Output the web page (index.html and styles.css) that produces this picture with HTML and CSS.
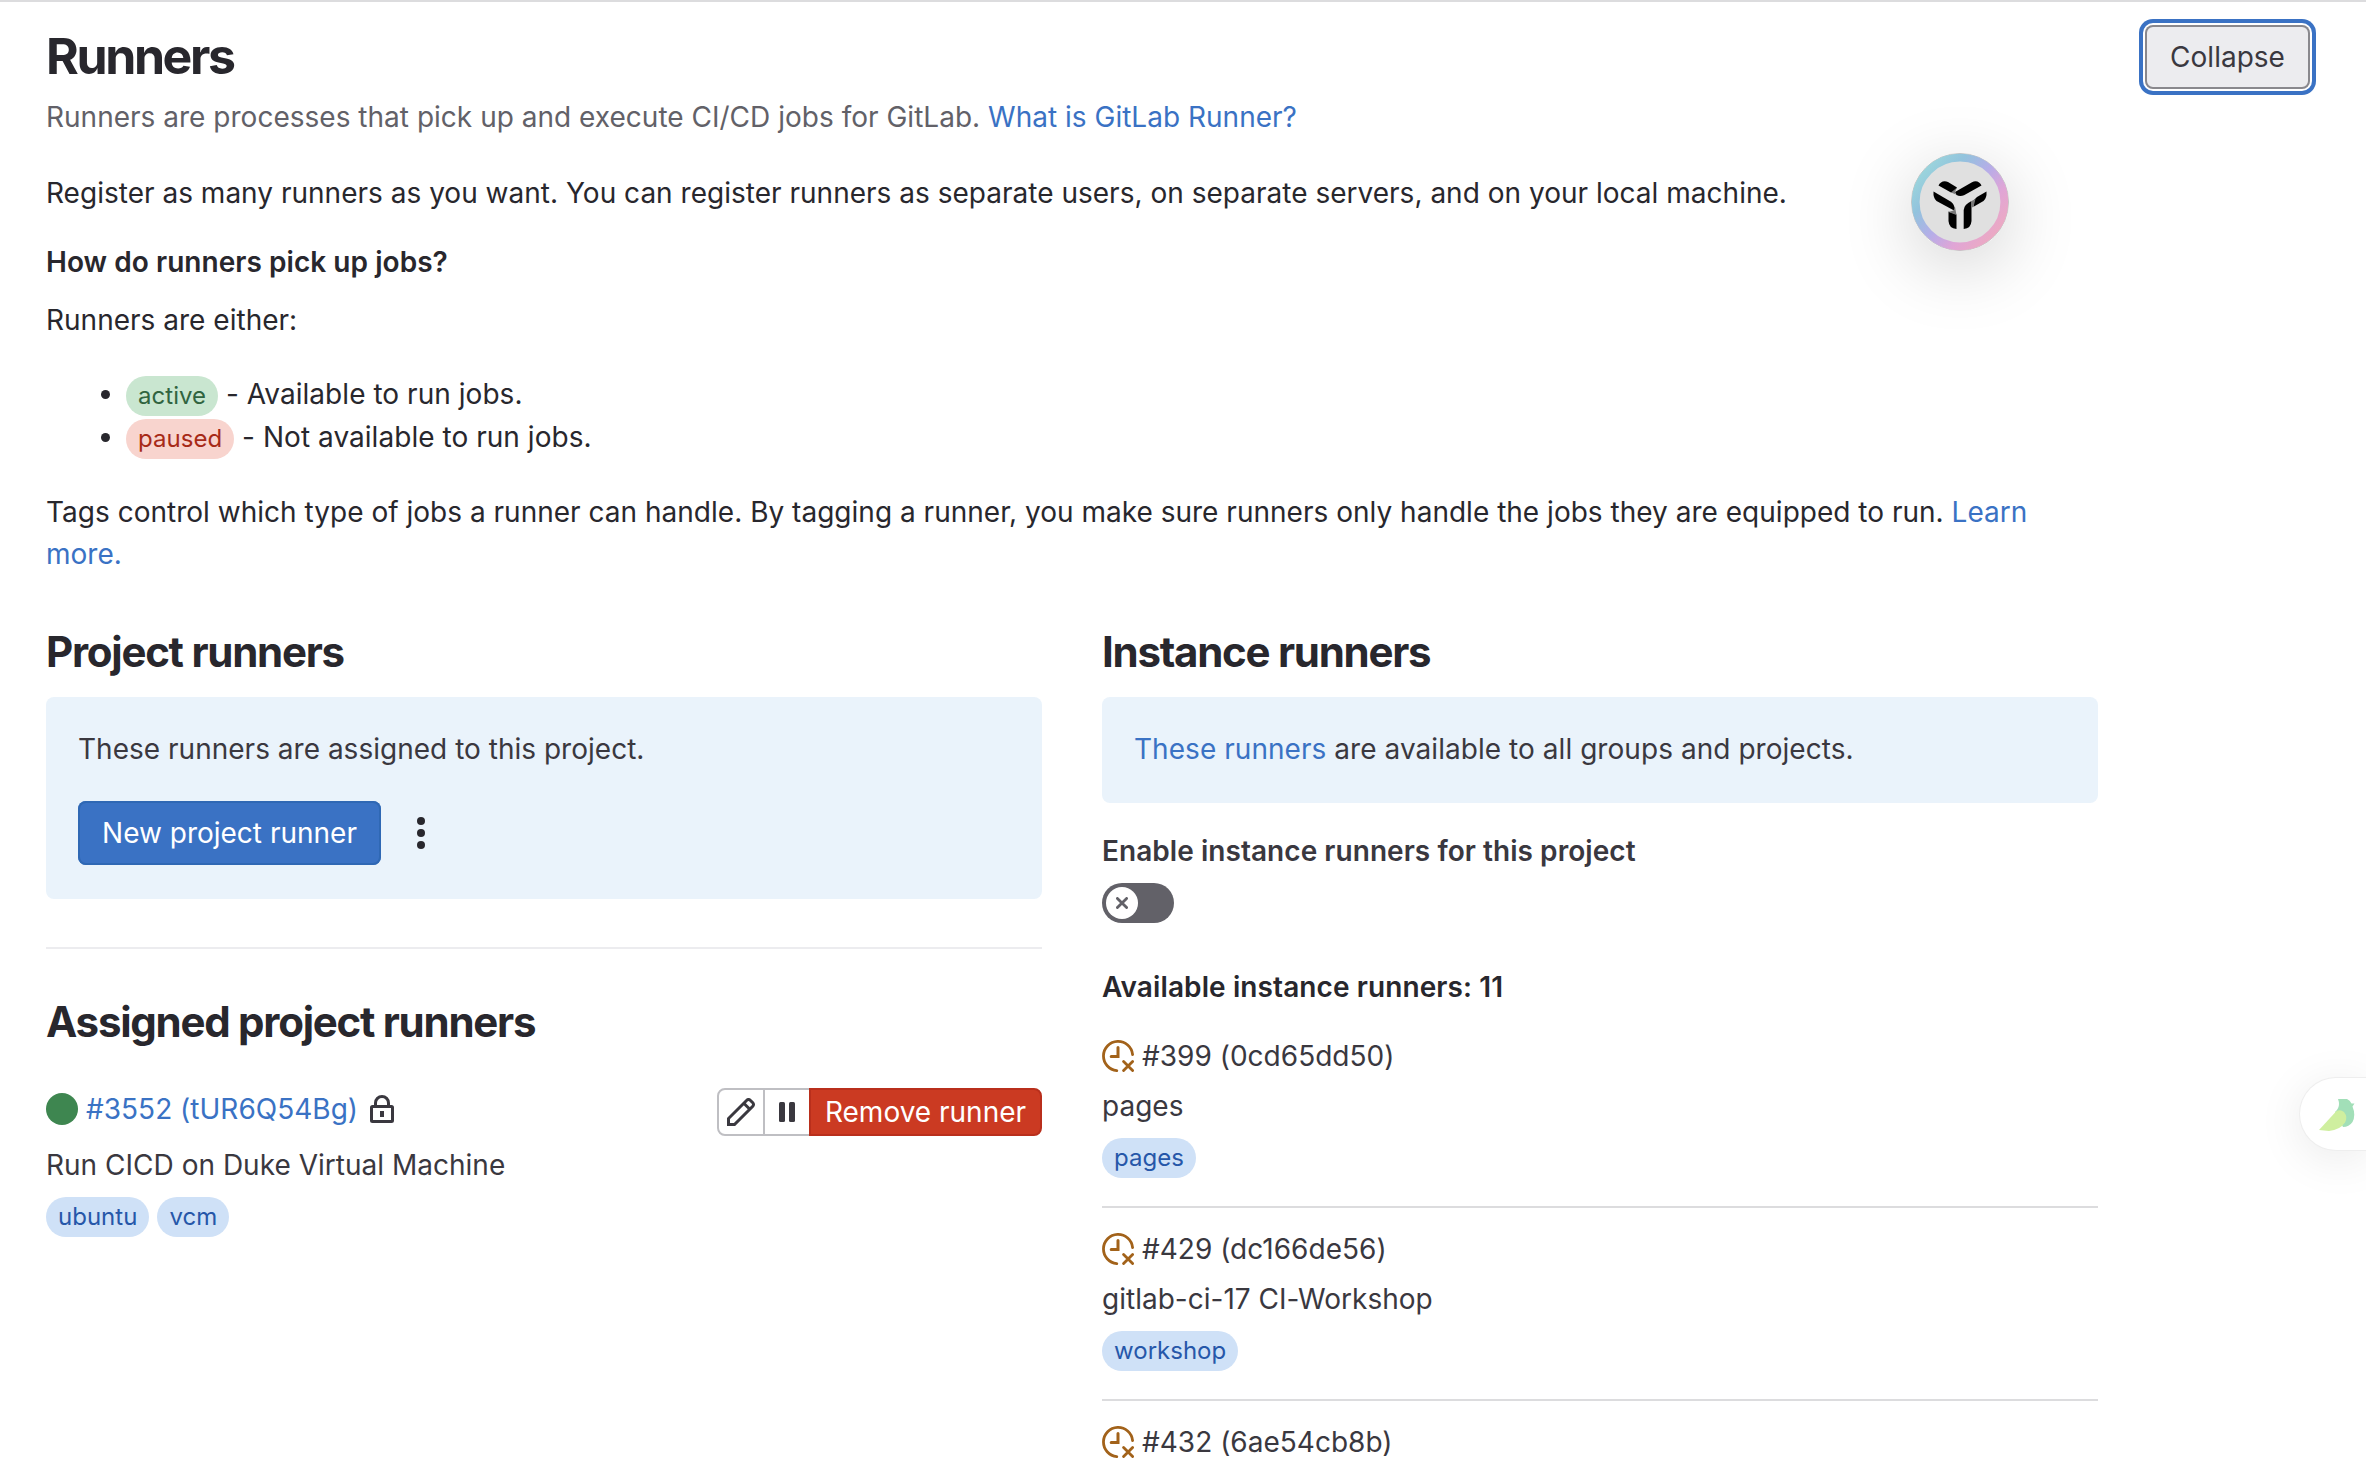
FILE: index.html
```html
<!DOCTYPE html>
<html lang="en">
<head>
<meta charset="utf-8">
<title>Runners</title>
<link rel="stylesheet" href="styles.css">
</head>
<body>
<svg class="defs" width="0" height="0">
  <symbol id="expired" viewBox="0 0 32 32">
    <g fill="none" stroke="currentColor" stroke-width="2.8" stroke-linecap="round">
      <path d="M30.6 14.6A14.6 14.6 0 1 0 14.8 30.6"/>
      <path d="M16 7.4v9.2H9.2" stroke-width="3"/>
      <path d="M21.6 21.6l9 9M30.6 21.6l-9 9"/>
    </g>
  </symbol>
</svg>
<main class="settings">
  <header class="settings-header">
    <div>
      <h1>Runners</h1>
      <p class="subtitle">Runners are processes that pick up and execute CI/CD jobs for GitLab. <a>What is GitLab Runner?</a></p>
    </div>
    <button class="btn btn-collapse">Collapse</button>
  </header>

  <div class="settings-content">
    <p class="register">Register as many runners as you want. You can register runners as separate users, on separate servers, and on your local machine.</p>
    <h4 class="pick-up">How do runners pick up jobs?</h4>
    <p class="either">Runners are either:</p>
    <ul class="states">
      <li><span class="badge success">active</span> - Available to run jobs.</li>
      <li><span class="badge danger">paused</span> - Not available to run jobs.</li>
    </ul>
    <p class="tags-help">Tags control which type of jobs a runner can handle. By tagging a runner, you make sure runners only handle the jobs they are equipped to run. <a>Learn more.</a></p>

    <div class="columns">
      <section>
        <h2>Project runners</h2>
        <div class="well">
          <p>These runners are assigned to this project.</p>
          <div class="well-actions">
            <button class="btn btn-confirm">New project runner</button>
            <svg class="kebab" width="8" height="32" viewBox="0 0 8 32" fill="#28272d"><circle cx="4" cy="4" r="4"/><circle cx="4" cy="16" r="4"/><circle cx="4" cy="28" r="4"/></svg>
          </div>
        </div>
        <hr>
        <h2>Assigned project runners</h2>
        <div class="assigned">
          <div class="runner">
            <div class="runner-name">
              <span class="online"></span>
              <a>#3552 (tUR6Q54Bg)</a>
              <svg class="lock" width="24" height="28" viewBox="0 0 24 28"><path d="M5.500 11V8a6.500 6.500 0 0 1 13 0v3" fill="none" stroke="#3a383f" stroke-width="3"/><rect x="1.500" y="11.500" width="21" height="15" rx="1" fill="none" stroke="#3a383f" stroke-width="3"/><path d="M10 16h4v6h-4z" fill="#3a383f"/></svg>
            </div>
            <p class="runner-desc">Run CICD on Duke Virtual Machine</p>
            <div class="tags"><span class="badge info">ubuntu</span><span class="badge info">vcm</span></div>
          </div>
          <div class="btn-group">
            <button class="edit"><svg width="28" height="28" viewBox="0 0 28 28" fill="none" stroke="#3a383f" stroke-width="3"><path d="M1.500 26.500v-6L19.800 2.200a2.400 2.400 0 0 1 3.400 0l2.600 2.600a2.400 2.400 0 0 1 0 3.400L7.500 26.500z"/><path d="M16.800 5.200l6 6"/></svg></button>
            <button class="pause"><svg width="16" height="20" viewBox="0 0 16 20" fill="#3a383f"><rect width="6" height="20" rx="1.500"/><rect x="10" width="6" height="20" rx="1.500"/></svg></button>
            <button class="remove">Remove runner</button>
          </div>
        </div>
      </section>

      <section>
        <h2>Instance runners</h2>
        <div class="well well-short">
          <p><a>These runners</a> are available to all groups and projects.</p>
        </div>
        <div class="toggle-label">Enable instance runners for this project</div>
        <div class="toggle"><span class="knob"><svg width="12" height="12" viewBox="0 0 12 12"><path d="M1.400 1.400l9.200 9.200M10.600 1.400l-9.200 9.200" stroke="#626168" stroke-width="2.800" stroke-linecap="round"/></svg></span></div>
        <h5>Available instance runners: 11</h5>
        <div class="list">
          <div class="item">
            <div class="runner-name"><svg class="expired"><use href="#expired"/></svg><span>#399 (0cd65dd50)</span></div>
            <p class="runner-desc">pages</p>
            <div class="tags"><span class="badge info">pages</span></div>
          </div>
          <div class="item">
            <div class="runner-name"><svg class="expired"><use href="#expired"/></svg><span>#429 (dc166de56)</span></div>
            <p class="runner-desc">gitlab-ci-17 CI-Workshop</p>
            <div class="tags"><span class="badge info">workshop</span></div>
          </div>
          <div class="item">
            <div class="runner-name"><svg class="expired"><use href="#expired"/></svg><span>#432 (6ae54cb8b)</span></div>
          </div>
        </div>
      </section>
    </div>
  </div>
</main>

<div class="assistant">
  <svg width="98" height="98" viewBox="0 0 98 98">
    <defs><linearGradient id="ring" x1="0.1" y1="0.15" x2="0.9" y2="0.85"><stop offset="0" stop-color="#9ad3dc"/><stop offset=".22" stop-color="#92c3dd"/><stop offset=".5" stop-color="#b6ade8"/><stop offset=".75" stop-color="#e0a5d6"/><stop offset="1" stop-color="#eba9c4"/></linearGradient></defs>
    <circle cx="49" cy="49" r="48.500" fill="#e0e0e0" stroke="#c4c4c4"/>
    <circle cx="49" cy="49" r="44.300" fill="none" stroke="url(#ring)" stroke-width="7.800"/>
    <g fill="#000">
      <path d="M27.500 32.500C29 29 33 27 37 29L46 34.500 43 38.500 40 39.500Z"/>
      <path d="M44 39L61 29.300C65 27 69 29 70.500 32.500L53 42.300Q49 44 45.500 42Z"/>
      <path d="M22.500 38.500L40 48.700Q44 51.500 44 58L25.500 48Q22 45 22.500 38.500Z"/>
      <path d="M75.500 38.500Q76 45 72.500 48L62.500 53.800 63 47 66 44Z"/>
      <path d="M60.500 48V68Q60 75.500 52.700 76V57Q53 51.500 60.500 48Z"/>
      <path d="M37.500 58.500L45.500 61.500V76Q38 75.500 37.500 68Z"/>
    </g>
    <path d="M40 39.500l6-5-2 4.500 1 2.500zM44 54l1.500 8-8-3 5-1.500zM60.500 48l4-2-2 7.800-2 1z" fill="#777"/>
  </svg>
</div>

<div class="side-tab">
  <svg width="36" height="34" viewBox="0 0 36 34">
    <path d="M19 1H28Q31 2 32.500 5.500L35.500 5.500 33.500 8.500Q37 17 33.500 24Q30 29 24 29L16 14Q22 9 19 1Z" fill="#a2dfb8"/>
    <path d="M0 32L17 13.500Q21 11 25 14Q29 19 26 24.500Q21 32 10 33Z" fill="#cfef9f"/>
  </svg>
</div>
</body>
</html>
```
FILE: styles.css
```css
* { box-sizing: border-box; }
html, body { height: 100%; }
body {
  margin: 0;
  overflow: hidden;
  position: relative;
  background: #fff;
  color: #28272d;
  font: 400 28px/42px Inter, "Liberation Sans", sans-serif;
  letter-spacing: 0.014px;
}
h1, h2, h4, h5, p, ul { margin: 0; font-size: inherit; }
a { color: #3a72c4; }
button { font: inherit; margin: 0; }
svg { display: block; flex: none; }
.defs { position: absolute; }

.settings { border-top: 2px solid #dcdcde; padding: 23px 56px 0 46px; }
.settings-header { display: flex; justify-content: space-between; align-items: flex-start; }
h1 { font-size: 50px; line-height: 60px; font-weight: 650; letter-spacing: -0.048em; margin-top: 1px; }
.subtitle { color: #626168; margin-top: 10px; }

.btn { height: 64px; padding: 0 24px; border-radius: 8px; line-height: 40px; border: 0; }
.btn-collapse {
  width: 165px;
  padding: 0;
  color: #3a383f;
  background: #ececef;
  box-shadow: inset 0 0 0 2px #89888d, 0 0 0 2px #fff, 0 0 0 6px #3a72c4;
}
.btn-confirm { width: 303px; padding: 0; color: #fff; background: #3a72c4; box-shadow: inset 0 0 0 2px #2f68b4; }

.settings-content { width: 2052px; }
.register { margin-top: 34px; }
.pick-up { margin-top: 27px; font-weight: 600; letter-spacing: 0.05px; }
.either { margin-top: 16px; }
.states { list-style: none; margin-top: 32px; padding-left: 80px; line-height: 43px; letter-spacing: 0.04px; }
.states li { display: flex; align-items: center; height: 43px; white-space: pre; }
.states li::before { content: ""; width: 9px; height: 9px; margin: 0 16px 0 -25px; border-radius: 50%; background: #28272d; }
.states .badge { margin-top: 3px; }
.tags-help { margin-top: 32px; }

.badge { display: block; height: 40px; padding: 0 12px; border-radius: 20px; font-size: 24px; line-height: 40px; }
.success { background: #c9e6d0; color: #306440; }
.danger { background: #f8d4ce; color: #a72a18; }
.info { background: #cfe1f7; color: #2657a9; }

.columns { display: grid; grid-template-columns: 996px 996px; column-gap: 60px; margin-top: 51px; }
h2 { font-size: 42px; line-height: 52px; font-weight: 650; letter-spacing: -0.03em; }
.well { margin-top: 19px; padding: 31px 32px 34px; border-radius: 8px; background: #eaf3fb; color: #3a383f; }
.well-short { padding-bottom: 33px; letter-spacing: 0.05px; }
.well-actions { display: flex; align-items: center; gap: 36px; margin-top: 31px; }
hr { height: 2px; margin: 48px 0 47px; border: 0; background: #ececef; }

.assigned { display: flex; justify-content: space-between; align-items: flex-start; margin-top: 40px; color: #3a383f; }
.runner-name { display: flex; align-items: center; gap: 8px; height: 42px; }
.online { width: 32px; height: 32px; border-radius: 50%; background: #3e8650; }
.lock { margin-left: 4px; }
.runner-desc { margin-top: 14px; }
.tags { display: flex; gap: 8px; margin-top: 11px; }

.btn-group { display: flex; height: 48px; }
.btn-group button { display: flex; align-items: center; justify-content: center; padding: 0; height: 48px; background: #fff; border: 2px solid #bfbfc3; }
.btn-group .edit { width: 48px; border-radius: 8px 0 0 8px; }
.btn-group .pause { width: 44px; border-width: 2px 0; }
.btn-group .remove { width: 233px; color: #fff; background: #cb3a22; border-color: #b92f1c; border-radius: 0 8px 8px 0; }

.toggle-label { margin-top: 27px; font-weight: 600; color: #3a383f; letter-spacing: 0.05px; }
.toggle { width: 72px; height: 40px; margin-top: 11px; padding: 4px; border-radius: 20px; background: #626168; }
.knob { display: grid; place-items: center; width: 32px; height: 32px; border-radius: 50%; background: #fff; }
h5 { margin-top: 43px; font-weight: 600; letter-spacing: 0.1px; }
.list { margin-top: 7px; color: #3a383f; }
.item { padding: 20px 0 28px; border-bottom: 2px solid #dcdcde; }
.item .runner-desc { margin-top: 8px; }
.item .tags { margin-top: 11px; }
.expired { width: 32px; height: 32px; color: #a2621a; }

.assistant { position: absolute; left: 1911px; top: 153px; width: 98px; height: 98px; border-radius: 50%; box-shadow: 0 16px 72px rgba(0, 0, 0, .18); }
.side-tab {
  position: absolute;
  right: 0;
  top: 1078px;
  width: 66px;
  height: 72px;
  padding: 20px 0 0 19px;
  border-radius: 36px 0 0 36px;
  background: #fff;
  box-shadow: 0 0 0 1px #eee, 0 8px 48px rgba(0, 0, 0, .09);
}
```
